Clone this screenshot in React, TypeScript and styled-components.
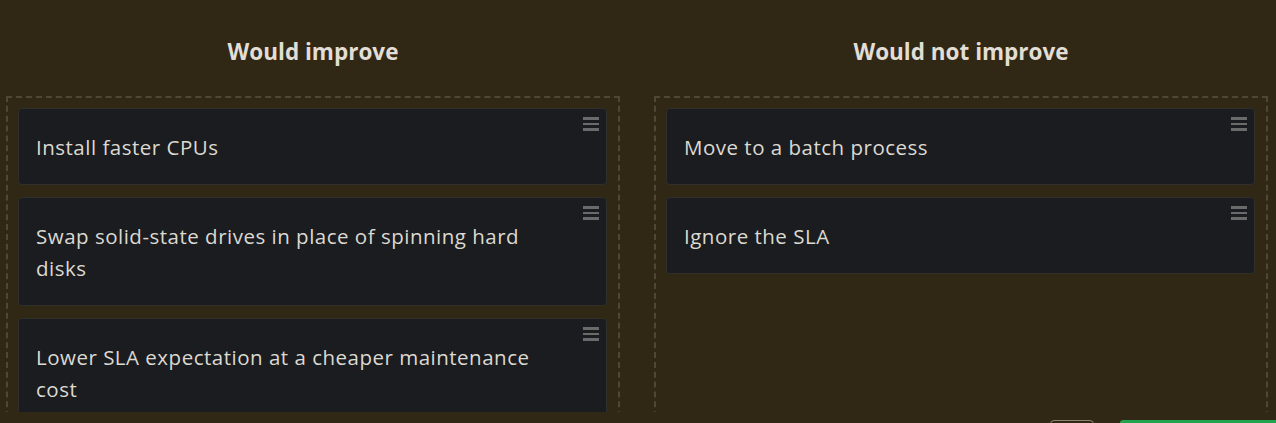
import React from "react";
import styled, { createGlobalStyle } from "styled-components";

const Global = createGlobalStyle`
  html, body {
    margin: 0;
    padding: 0;
    background: #302815;
  }
  body {
    font-family: "Open Sans", "Liberation Sans", sans-serif;
    overflow: hidden;
  }
`;

const Page = styled.div`
  width: 1276px;
  height: 423px;
  padding: 0 8px 0 6px;
  box-sizing: border-box;
  overflow: hidden;
`;

const Columns = styled.div`
  display: grid;
  grid-template-columns: 1fr 1fr;
  column-gap: 34px;
  height: 412px;
  overflow: hidden;
`;

const Column = styled.section`
  display: flex;
  flex-direction: column;
  min-width: 0;
`;

const Heading = styled.h2`
  margin: 0;
  padding: 36px 0 28px;
  line-height: 32px;
  font-size: 22.5px;
  font-weight: 700;
  text-align: center;
  color: #e2ded6;
`;

const DropZone = styled.div`
  flex: 1;
  border: 2px dashed #4f4633;
  border-bottom: none;
  padding: 10px 11px 0 10px;
  display: flex;
  flex-direction: column;
  gap: 12px;
`;

const Card = styled.div`
  position: relative;
  flex-shrink: 0;
  background: #1b1c1f;
  border: 1px solid #2f2f2c;
  border-radius: 4px;
  padding: 22px 48px 21px 17px;
  font-size: 20.5px;
  line-height: 32px;
  letter-spacing: 0.5px;
  color: #dcd9d2;
`;

const Handle = styled.span`
  position: absolute;
  top: 8px;
  right: 7px;
  display: flex;
  flex-direction: column;
  gap: 3px;
  & > i {
    display: block;
    width: 16px;
    height: 2.5px;
    background: #6a6a6a;
  }
`;

const Footer = styled.div`
  display: flex;
  justify-content: flex-end;
  gap: 26px;
  padding-top: 8px;
`;

const GhostButton = styled.button`
  width: 44px;
  height: 30px;
  border: 1px solid #8a8170;
  border-radius: 4px;
  background: transparent;
`;

const PrimaryButton = styled.button`
  width: 156px;
  height: 30px;
  margin-right: -8px;
  border: none;
  border-radius: 3px 0 0 0;
  background: #21a350;
`;

const columns = [
  {
    title: "Would improve",
    items: [
      "Install faster CPUs",
      "Swap solid-state drives in place of spinning hard disks",
      "Lower SLA expectation at a cheaper maintenance cost",
    ],
  },
  {
    title: "Would not improve",
    items: ["Move to a batch process", "Ignore the SLA"],
  },
];

export default function App() {
  return (
    <Page>
      <Global />
      <Columns>
        {columns.map((col) => (
          <Column key={col.title}>
            <Heading>{col.title}</Heading>
            <DropZone>
              {col.items.map((item) => (
                <Card key={item}>
                  <Handle>
                    <i />
                    <i />
                    <i />
                  </Handle>
                  {item}
                </Card>
              ))}
            </DropZone>
          </Column>
        ))}
      </Columns>
      <Footer>
        <GhostButton />
        <PrimaryButton />
      </Footer>
    </Page>
  );
}
